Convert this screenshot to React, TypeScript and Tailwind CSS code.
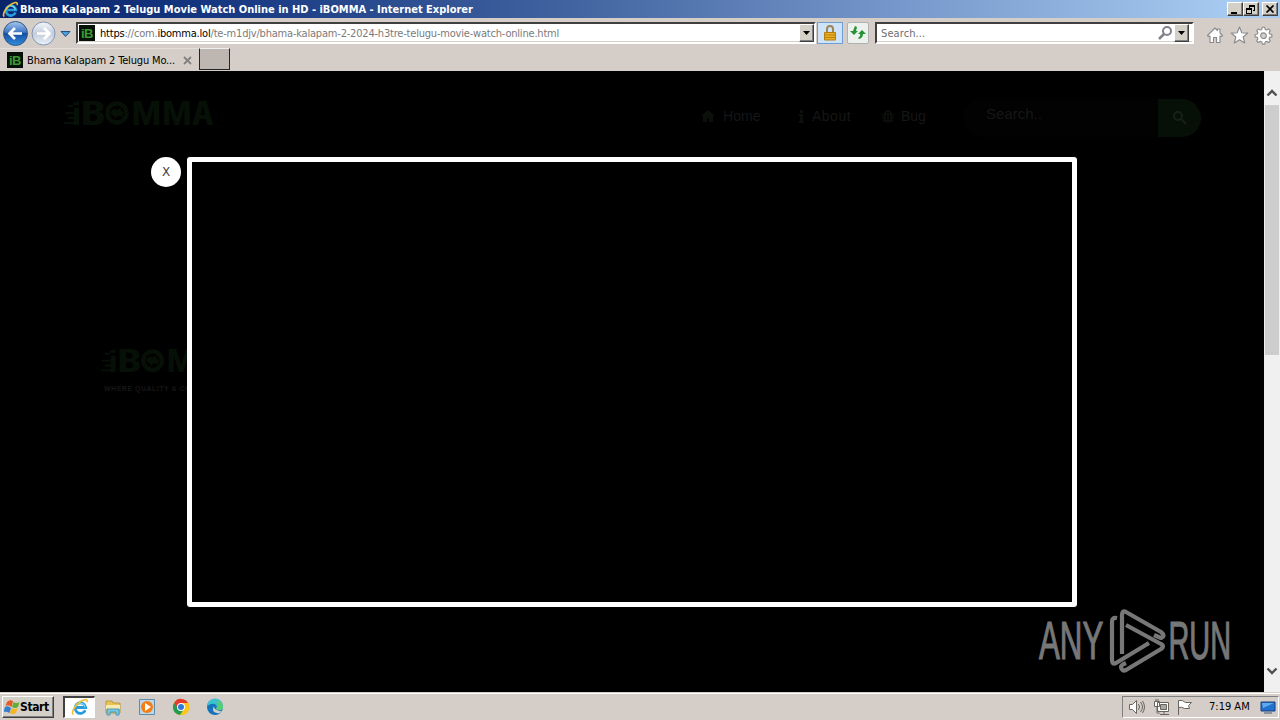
import type { ReactNode } from 'react';

const uiFont = "font-['DejaVu_Sans_Condensed','DejaVu_Sans',sans-serif] [font-stretch:condensed]";

const raised = 'bg-[#d4d0c8] border border-t-white border-l-white border-r-[#404040] border-b-[#404040] shadow-[inset_-1px_-1px_0_#808080]';

function IeLogo({ size }: { size: number }) {
  return (
    <svg width={size} height={size} viewBox="0 0 18 18" className="shrink-0">
      <path d="M14.3 12.2A5.3 5.3 0 1 1 14.7 9.500H5" fill="none" stroke="#269ddd" strokeWidth="2.800" />
      <path d="M14 9.500A5 5 0 0 0 4.500 8" fill="none" stroke="#78d5f8" strokeWidth="1.200" />
      <path d="M2.500 16.500C-.5 15 4 7 9.500 3.500 13.600 1 17 .6 16 4.400" fill="none" stroke="#efc13a" strokeWidth="1.700" />
    </svg>
  );
}

function Favicon() {
  return (
    <span className="flex h-4 w-4 shrink-0 items-center justify-center bg-[#061006] font-['Liberation_Sans',sans-serif] text-[13px] leading-none font-bold tracking-[-0.5px] text-[#3b9b31]">
      iB
    </span>
  );
}

function WindowButton({ children, className = '' }: { children: ReactNode; className?: string }) {
  return (
    <button className={`flex h-[14px] w-4 items-center justify-center ${raised} ${className}`}>
      {children}
    </button>
  );
}

function TitleBar() {
  return (
    <header className="flex h-[18px] items-center bg-[linear-gradient(90deg,#0a246a_0%,#153680_16%,#4264a0_45%,#6c8dc3_65%,#a6caf0_96%)] pr-[2px] pl-[2px]">
      <IeLogo size={17} />
      <h1 className="ml-px pt-px text-[11px] leading-[17px] font-bold tracking-[-0.005px] whitespace-nowrap text-white">
        Bhama Kalapam 2 Telugu Movie Watch Online in HD - iBOMMA - Internet Explorer
      </h1>
      <div className="ml-auto flex">
        <WindowButton>
          <svg width="12" height="10"><path d="M2 8h6v2H2z" /></svg>
        </WindowButton>
        <WindowButton>
          <svg width="12" height="10" fill="none" stroke="#000" shapeRendering="crispEdges">
            <path d="M4 1h6M4 2h6M4.500 1v3M9.500 1v6M8 6.500h2M1 4h6M1 5h6M1.500 4v5.500h5V4" />
          </svg>
        </WindowButton>
        <WindowButton className="ml-[3px]">
          <svg width="10" height="8"><path d="M1.500 0.500l7 7M8.500 0.500l-7 7" stroke="#000" strokeWidth="1.700" /></svg>
        </WindowButton>
      </div>
    </header>
  );
}

function DropButton() {
  return (
    <button className={`flex h-[18px] w-[15px] shrink-0 items-center justify-center ${raised}`}>
      <svg width="7" height="4"><path d="M0 0h7L3.500 4z" /></svg>
    </button>
  );
}

function NavigationBar() {
  return (
    <div className="flex h-[30px] items-start">
      <svg width="76" height="30" className="shrink-0">
        <defs>
          <linearGradient id="back" x2="0" y2="1">
            <stop stopColor="#a7c8ee" />
            <stop offset=".45" stopColor="#3c77c3" />
            <stop offset=".5" stopColor="#174f9f" />
            <stop offset="1" stopColor="#318fe0" />
          </linearGradient>
          <linearGradient id="forward" x2="0" y2="1">
            <stop stopColor="#f4f7fb" />
            <stop offset=".5" stopColor="#c4ccda" />
            <stop offset="1" stopColor="#e9f1fb" />
          </linearGradient>
        </defs>
        <circle cx="15.500" cy="15.500" r="12" fill="url(#back)" stroke="#375783" />
        <path d="M22 15.500H10M15 10l-5.500 5.500L15 21" fill="none" stroke="#fff" strokeWidth="2.700" />
        <circle cx="43.500" cy="15.500" r="11.500" fill="url(#forward)" stroke="#8195af" />
        <path d="M37 15.500h12M44 10l5.500 5.500L44 21" fill="none" stroke="#fff" strokeWidth="2.700" />
        <path d="M61 13.500h9l-4.500 5z" fill="#4ca0d8" stroke="#204f8c" />
      </svg>
      <div className="mt-[4px] flex h-[22px] w-[740px] shrink-0 items-center border-2 border-t-[#404040] border-r-white border-b-white border-l-[#404040] bg-white pl-px shadow-[inset_0_-1px_0_#d4d0c8]">
        <Favicon />
        <p className="mt-[2px] ml-[5px] flex-1 text-[11px] leading-4 tracking-[-0.2px] whitespace-nowrap text-[#7b7b7b]">
          <span className="text-black">https</span>://com.<span className="text-black">ibomma.lol</span>/te-m1djv/bhama-kalapam-2-2024-h3tre-telugu-movie-watch-online.html
        </p>
        <DropButton />
      </div>
      <button className="mt-[4px] ml-[1px] flex h-[22px] w-[26px] items-center justify-center border border-[#6f9fd2] bg-[#cfe3f8]">
        <svg width="16" height="18" viewBox="0 0 16 18">
          <path d="M5 9V5a3 3 0 0 1 6 0v4" fill="none" stroke="#9b8654" strokeWidth="2" />
          <path d="M2.500 8.500h11v7.500h-11z" fill="#e9ad20" stroke="#b47c11" />
          <path d="M3 11h10M3 13.500h10" stroke="#be8213" />
        </svg>
      </button>
      <button className="mt-[4px] ml-[4px] flex h-[22px] w-[22px] items-center justify-center rounded-[2px] border border-[#b0b1b0] bg-[#edf1ed]">
        <svg width="18" height="16" viewBox="0 0 18 16" fill="#249334">
          <path d="M6 1l2 1-1 4h2L5 10 1 6h3z" />
          <path d="M13 5l4 4h-3q0 4-4 5l-1-1q3-2 2-4H9z" />
        </svg>
      </button>
      <div className="mt-[4px] ml-[6px] flex h-[22px] w-[319px] shrink-0 items-center border-2 border-t-[#404040] border-r-white border-b-white border-l-[#404040] bg-white pr-[3px] pl-[4px] shadow-[inset_0_-1px_0_#d4d0c8]">
        <span className="mt-[2px] flex-1 text-[11px] leading-4 tracking-[0.1px] text-[#6d6d6d]">Search...</span>
        <svg width="15" height="16" viewBox="0 0 15 16" fill="none" stroke="#81818b" strokeWidth="2" className="mr-px">
          <circle cx="9" cy="6" r="4" /><path d="M6 9l-5 5" strokeWidth="2.500" />
        </svg>
        <DropButton />
      </div>
      <svg width="75" height="30" viewBox="0 0 75 30" className="ml-[11px] shrink-0" fill="#fff" stroke="#89898c" strokeWidth="1.100" strokeLinejoin="round">
        <path d="M2.500 17.500L10 10l2.500 2.500V11H15v4l2.500 2.500-1 1-1.500-.5v6.500h-3.500v-5h-3v5H5V18l-1.500.5z" />
        <path d="M34.500 9l2.300 5.700 6 .4-4.600 3.900 1.500 6-5.200-3.300-5.200 3.300 1.500-6-4.600-3.900 6-.4z" />
        <g transform="translate(58.500 17)">
          <path d="M-1.200-7.700h2.400l.5 2.200 1.500.6 1.900-1.200 1.700 1.700-1.200 1.900.6 1.500 2.200.5v2.400l-2.200.5-.6 1.500 1.200 1.900-1.700 1.700-1.900-1.200-1.500.6-.5 2.200h-2.400l-.5-2.200-1.500-.6-1.900 1.200-1.700-1.700 1.200-1.900-.6-1.500-2.200-.5v-2.400l2.200-.5.6-1.500-1.200-1.900 1.700-1.700 1.900 1.200 1.500-.6z" />
          <circle cy=".7" r="2.800" fill="#d4d0c8" />
        </g>
      </svg>
    </div>
  );
}

function TabBar() {
  return (
    <div className="flex h-[23px]">
      <div className="flex h-[23px] w-[199px] items-center border-t border-[#e4dfd9] pl-[7px]">
        <Favicon />
        <span className="mt-px ml-[4px] w-[156px] text-[11px] leading-4 tracking-[-0.16px] whitespace-nowrap">Bhama Kalapam 2 Telugu Mo...</span>
        <svg width="9" height="9" className="shrink-0"><path d="M1 1l7 7M8 1L1 8" stroke="#858181" strokeWidth="1.800" /></svg>
      </div>
      <button className="h-[22px] w-[31px] border border-t-[#eee] border-r-[#242424] border-b-[#242424] border-l-[#242424] bg-[#beb6b1]" />
    </div>
  );
}

function BommaLogo({ width }: { width: number }) {
  return (
    <svg width={width} height={(width * 28) / 150} viewBox="0 0 150 28" fill="#071006" className="overflow-visible">
      <path d="M4 6h5v2H4zM1 13h10v2H1zM4 18h7v2H4zM0 23h10v2H0zM10 9h5v17h-5zM9 4l6-2v4H9z" />
      <text x="16" y="26" textLength="26" lengthAdjust="spacingAndGlyphs" className="font-['Open_Sans',sans-serif] text-[33px] font-bold">B</text>
      <circle cx="53" cy="14" r="9.500" fill="none" stroke="#071006" strokeWidth="4.500" />
      <path d="M47 12l4-3 1 2 5-2v3l3 1-2 5-4-1-3 3-1-3-3-1z" />
      <text x="67" y="26" textLength="82" lengthAdjust="spacingAndGlyphs" className="font-['Open_Sans',sans-serif] text-[33px] font-bold">MMA</text>
    </svg>
  );
}

function SiteHeader() {
  return (
    <div className="flex items-start pt-[28px] pl-[64px] font-['Liberation_Sans',sans-serif] text-[14px] text-[#161616]">
      <BommaLogo width={150} />
      <nav className="mt-[9px] ml-[487px] flex h-4 items-center">
        <span className="flex w-[95px] items-center tracking-[0.1px]">
          <svg width="14" height="12" className="mr-[8px]" fill="#0c100a"><path d="M7 0l7 6h-2v6H8V8H6v4H2V6H0z" /></svg>
          Home
        </span>
        <span className="flex w-[85px] items-center tracking-[0.5px]">
          <svg width="10" height="13" className="mr-[6px]" fill="#0c100a"><path d="M4 0h3v3H4zM3 4h4v7h1v2H3v-2h1V6H3z" /></svg>
          About
        </span>
        <span className="flex w-[82px] items-center">
          <svg width="12" height="13" className="mr-[7px] ml-[1px]" fill="none" stroke="#0c100a" strokeWidth="1.500">
            <path d="M3 4h6v6q-3 4-6 0zM3 3q3-4 6 0M0 4l3 2M12 4L9 6M0 8h3M9 8h3M1 12l2-2M11 12l-2-2M6 5v7" />
          </svg>
          Bug
        </span>
      </nav>
      <div className="flex h-[38px] w-[238px] rounded-full bg-[#020202]">
        <span className="w-[195px] pt-[4px] pl-[23px] text-[15px]">Search..</span>
        <button className="flex w-[43px] items-center justify-center rounded-r-full bg-[#071006]">
          <svg width="14" height="14" fill="none" stroke="#182116" strokeWidth="2"><circle cx="5" cy="5" r="4" /><path d="M8 8l5 5" /></svg>
        </button>
      </div>
    </div>
  );
}

const markText = "font-['Liberation_Sans',sans-serif] text-[53px] [font-stretch:normal]";

function AnyRunMark() {
  return (
    <svg width="202" height="66" viewBox="0 0 202 66" className="absolute top-[538px] left-[1038px] overflow-visible" fill="#777" stroke="#777">
      <text transform="translate(1 49.500) scale(.59 1)" vectorEffect="non-scaling-stroke" strokeWidth="1" className={markText}>ANY</text>
      <text transform="translate(130.500 49.500) scale(.545 1)" vectorEffect="non-scaling-stroke" strokeWidth="1" className={markText}>RUN</text>
      <g fill="none" strokeWidth="4.200" strokeLinejoin="round">
        <path d="M79 9q-5-1-5 4v38q0 5 4 3l33-20" />
        <path d="M84 45V6q0-5 4-3l35 20q5 4 0 6l-7-3" />
        <path d="M88 16l35 19q4 2 0 5L88 61q-4 2-5-3 0-2 5-4" />
      </g>
    </svg>
  );
}

function Page() {
  return (
    <main className="relative flex h-[621px] overflow-hidden bg-black">
      <div className="w-[1264px]">
        <SiteHeader />
        <div className="mt-[210px] ml-[101px]">
          <BommaLogo width={146} />
          <p className="mt-[11px] ml-[3px] font-['Liberation_Sans',sans-serif] text-[7px] leading-2 font-bold tracking-[0.5px] text-[#161616]">WHERE QUALITY &amp; COMFORT</p>
        </div>
      </div>
      <div className="flex w-4 flex-col items-center bg-[#f0f0f0]">
        <svg width="16" height="34" fill="none" stroke="#505050" strokeWidth="2.400"><path d="M3.500 24.500L8 20l4.500 4.500" /></svg>
        <div className="h-[250px] w-[14px] bg-[#cdcdcd]" />
        <svg width="16" height="20" className="mt-auto mb-[11px]" fill="none" stroke="#505050" strokeWidth="2.400"><path d="M3.500 7.500L8 12l4.500-4.500" /></svg>
      </div>
      {/* player dialog sits above the dimmed page */}
      <div role="dialog" className="absolute top-[86px] left-[187px] h-[450px] w-[890px] rounded-[3px] border-[5px] border-white bg-black" />
      <button className="absolute top-[86px] left-[151px] h-[30px] w-[30px] rounded-full bg-white font-['DejaVu_Sans',sans-serif] text-[12px] leading-none [font-stretch:normal] text-[#444]">X</button>
      <AnyRunMark />
    </main>
  );
}

function Taskbar() {
  return (
    <footer className="flex h-[28px] items-center border-t border-[#d4d0c8] pl-[2px] shadow-[inset_0_1px_0_#fff]">
      <button className={`flex h-[22px] w-[52px] items-center pl-[1px] text-[12px] font-bold ${raised}`}>
        <svg width="16" height="16" viewBox="0 0 16 16" className="shrink-0">
          <path d="M3 3q3-3 6-1L7.500 8Q4.500 5 1.500 7z" fill="#e85924" />
          <path d="M9.500 3q3 2 6 0L14 8q-3 2-6 0z" fill="#62ad38" />
          <path d="M1 8q3-2 6 1l-1.500 5q-3-2-6-1z" fill="#347ed0" />
          <path d="M7.500 9q3 2 6 0L12 14q-3 2-6 0z" fill="#f3b71f" />
        </svg>
        <span className="mt-px tracking-[-0.4px]">Start</span>
      </button>
      <div className="ml-[9px] flex h-[22px] w-[32px] items-center justify-center border border-t-2 border-l-2 border-t-[#404040] border-r-white border-b-white border-l-[#404040] bg-white"><IeLogo size={18} /></div>
      <svg width="18" height="18" className="ml-[9px]">
        <path d="M2 3h6l1 2h7v10H2z" fill="#e8c454" stroke="#ba983c" />
        <path d="M2 7h14v4H2z" fill="#f7eab0" />
        <path d="M3 17v-6h12v6h-3v-3H6v3z" fill="#79c6df" stroke="#4f9ab8" />
      </svg>
      <svg width="18" height="18" className="ml-[16px]">
        <path d="M1.500 1.500h15v15h-15z" fill="#bdd7ea" stroke="#5e8dac" />
        <circle cx="9" cy="9" r="6" fill="#f47d14" /><path d="M7 5l6 4-6 4z" fill="#fff" />
      </svg>
      <svg width="18" height="18" viewBox="0 0 18 18" className="ml-[16px]">
        <circle cx="9" cy="9" r="8" fill="#fbc51b" />
        <path d="M9 9H17A8 8 0 0 0 2 5L5.500 11z" fill="#e33c2e" />
        <path d="M2 5a8 8 0 0 0 6 12l4-6-5 1z" fill="#239d4d" />
        <path d="M9 5h7.500a8 8 0 0 1-8 12l4-6z" fill="#fbc51b" />
        <circle cx="9" cy="9" r="4" fill="#fff" /><circle cx="9" cy="9" r="3" fill="#3477dc" />
      </svg>
      <svg width="18" height="18" viewBox="0 0 18 18" className="ml-[16px]">
        <circle cx="9" cy="9" r="8" fill="#1473ba" />
        <path d="M1 8A8 8 0 0 1 17 9q0 4-5 3-3-1-1-3Q9 3 1 8z" fill="#3bc2ce" />
        <path d="M11 2q6 2 6 7 0 4-5 3-3-1-1-3 2-3 0-7z" fill="#5acb79" />
        <path d="M8 8q-3 6 3 7 3 1 5-2-2 1-5-1-3-1-3-4z" fill="#d4d0c8" />
      </svg>
      <div className="mr-[1px] ml-auto flex h-[22px] w-[157px] items-center border border-t-[#808080] border-r-white border-b-white border-l-[#808080]">
        <svg width="68" height="20" className="ml-[5px]" fill="#fff" stroke="#68655f">
          <path d="M1.500 7.500h3l4-4v13l-4-4h-3z" />
          <path d="M10.500 7q2 3 0 6M12.500 5q4 5 0 10M14.500 4q4 6 0 12" fill="none" />
          <path d="M29.500 5.500h11v9h-11zM32 17.500h9M36 15v2M26.500 4.500h5v5h-5zM28 2v2M30 2v2M29 10v6h3" />
          <path d="M32.500 7.500h6v5h-6z" fill="#aaa9a5" />
          <path d="M50.500 18V3.500q4-1 7 2h6l-3 3 1 3h-5q-3-2-6-1" />
        </svg>
        <span className="mt-[2px] ml-[13px] text-[11px] whitespace-nowrap">7:19 AM</span>
        <svg width="16" height="16" className="mr-[2px] ml-auto">
          <path d="M1 3h14v9H1z" fill="#2371cf" stroke="#153e7e" /><path d="M2 4h12L3 9z" fill="#5eabe9" /><path d="M4 14h8" stroke="#435a75" />
        </svg>
      </div>
    </footer>
  );
}

export default function App() {
  return (
    <div className={`flex h-[720px] w-[1280px] flex-col overflow-hidden bg-[#d5cec8] text-black ${uiFont}`}>
      <TitleBar />
      <NavigationBar />
      <TabBar />
      <Page />
      <Taskbar />
    </div>
  );
}
